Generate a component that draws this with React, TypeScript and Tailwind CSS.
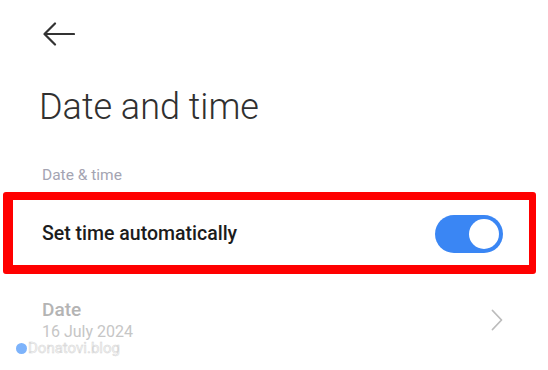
const BackArrow = () => (
  <svg width="32" height="24" viewBox="0 0 32 24" fill="none">
    <path d="M31 12H2M12 1.5L1.5 12L12 22.5" stroke="#333333" strokeWidth="2.2" strokeLinecap="round" strokeLinejoin="round" />
  </svg>
);

const Chevron = () => (
  <svg width="12" height="22" viewBox="0 0 12 22" fill="none">
    <path d="M1.5 1.5L10.5 11L1.5 20.5" stroke="#bcbcbc" strokeWidth="1.8" strokeLinecap="round" strokeLinejoin="round" />
  </svg>
);

const Toggle = ({ on }: { on: boolean }) => (
  <div className={`flex h-[38px] w-[68px] items-center rounded-full px-[4px] ${on ? "justify-end bg-[#3a86f4]" : "justify-start bg-gray-300"}`}>
    <div className="h-[30px] w-[30px] rounded-full bg-white" />
  </div>
);

export default function App() {
  return (
    <div className="relative h-[370px] w-[548px] overflow-hidden bg-white font-['Roboto',sans-serif]">
      <div className="pl-[43px] pt-[22px]">
        <BackArrow />
      </div>

      <h1 className="ml-[39px] mt-[41px] text-[36px] font-light leading-[40px] text-[#303030]">Date and time</h1>

      <p className="ml-[42px] mt-[38px] text-[15.5px] leading-[20px] text-[#a4a4b2]">Date &amp; time</p>

      <div className="ml-[3px] mt-[7px] flex h-[82px] w-[533px] items-center justify-between rounded-[3px] border-b-[9px] border-l-[10px] border-r-[7px] border-t-[8px] border-[#ff0000] pl-[29px] pr-[26px] pt-[3px]">
        <span className="text-[19.5px] font-medium text-[#1c1c1c]">Set time automatically</span>
        <Toggle on />
      </div>

      <div className="mt-[24px] flex items-center justify-between pl-[42px] pr-[45px]">
        <div>
          <div className="text-[19px] font-medium leading-[24px] text-[#b4b4b4]">Date</div>
          <div className="text-[16px] leading-[20px] text-[#c6c6c6]">16 July 2024</div>
        </div>
        <Chevron />
      </div>

      <div className="absolute left-[16px] top-[339px] flex items-center gap-[1px]">
        <div className="h-[11px] w-[11px] rounded-full bg-[#7db3fb]" />
        <span className="text-[15px] leading-[18px] text-[#f6f6f6] [-webkit-text-stroke:0.5px_#d4d4d4]">Donatovi.blog</span>
      </div>
    </div>
  );
}
